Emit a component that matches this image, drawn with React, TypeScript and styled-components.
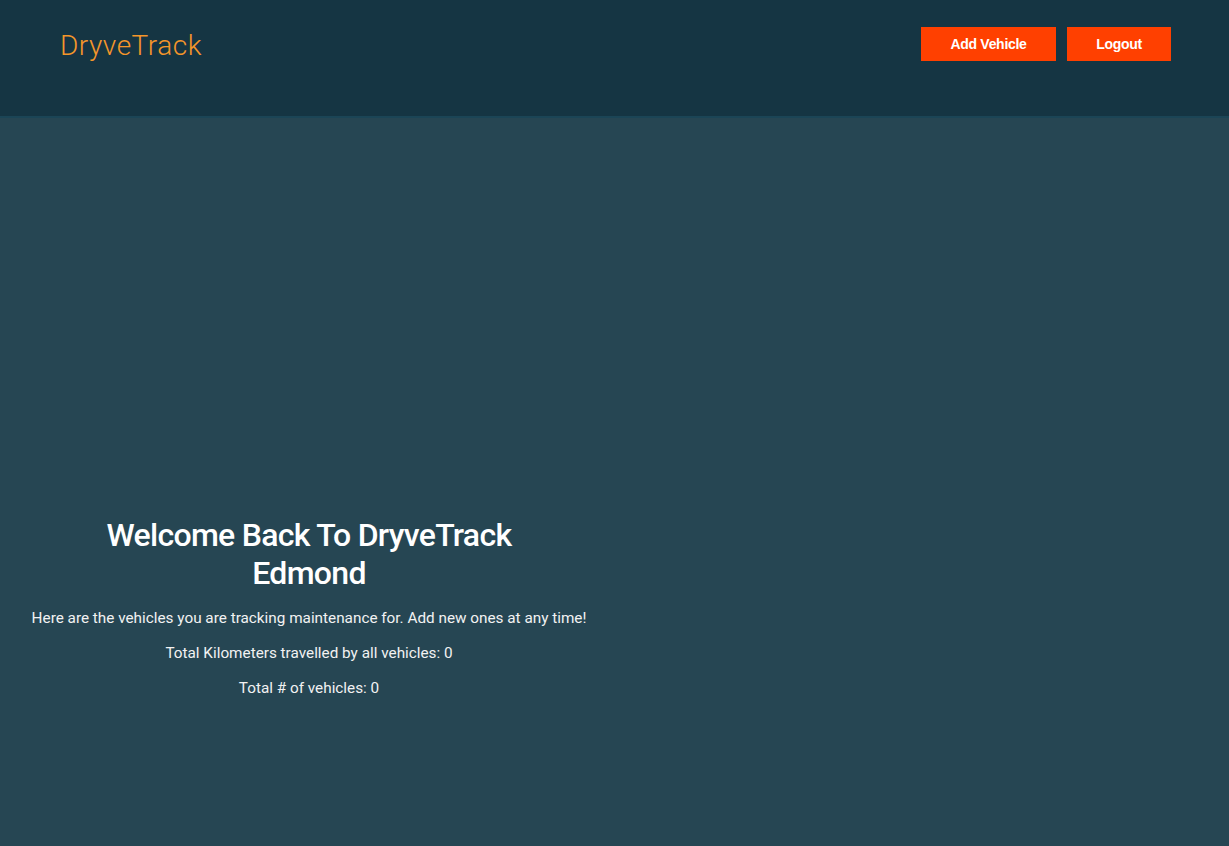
import React from 'react';
import styled, { createGlobalStyle } from 'styled-components';

const GlobalStyle = createGlobalStyle`
  html, body {
    margin: 0;
    padding: 0;
    background: #264653;
    font-family: Roboto, "Liberation Sans", sans-serif;
  }
`;

const Page = styled.div`
  min-height: 846px;
  display: flex;
  flex-direction: column;
  background: #264653;
`;

const Header = styled.header`
  height: 118px;
  background: #153543;
  border-bottom: 2px solid #1b4556;
  display: flex;
  justify-content: space-between;
  align-items: flex-start;
  padding: 0 58px 0 60px;
  box-sizing: border-box;
`;

const Logo = styled.div`
  color: #f4962a;
  font-size: 28px;
  font-weight: 300;
  letter-spacing: 0.5px;
  margin-top: 29px;
`;

const Actions = styled.nav`
  display: flex;
  gap: 11px;
  margin-top: 27px;
`;

const ActionButton = styled.button<{ w: number }>`
  width: ${p => p.w}px;
  height: 34px;
  border: none;
  border-radius: 0;
  background: #ff4000;
  color: #fff;
  font-family: "Liberation Sans", Arial, sans-serif;
  font-weight: 700;
  font-size: 14px;
  letter-spacing: -0.3px;
  cursor: pointer;
`;

const Main = styled.main`
  flex: 1;
  display: grid;
  grid-template-columns: 618px 1fr;
`;

const Summary = styled.section`
  padding-top: 398px;
  text-align: center;
  color: #fff;
  display: flex;
  flex-direction: column;
  align-items: center;
`;

const Heading = styled.h1`
  font-size: 32px;
  font-weight: 500;
  line-height: 38px;
  margin: 0 0 17px;
  max-width: 440px;
  letter-spacing: -0.7px;
`;

const Line = styled.p`
  font-size: 15.3px;
  line-height: 19px;
  margin: 0 0 16px;
  color: #f2f2f2;
`;

export default function App() {
  return (
    <>
      <GlobalStyle />
      <Page>
        <Header>
          <Logo>DryveTrack</Logo>
          <Actions>
            <ActionButton w={135}>Add Vehicle</ActionButton>
            <ActionButton w={104}>Logout</ActionButton>
          </Actions>
        </Header>
        <Main>
          <Summary>
            <Heading>Welcome Back To DryveTrack Edmond</Heading>
            <Line>Here are the vehicles you are tracking maintenance for. Add new ones at any time!</Line>
            <Line>Total Kilometers travelled by all vehicles: 0</Line>
            <Line>Total # of vehicles: 0</Line>
          </Summary>
          <div />
        </Main>
      </Page>
    </>
  );
}
